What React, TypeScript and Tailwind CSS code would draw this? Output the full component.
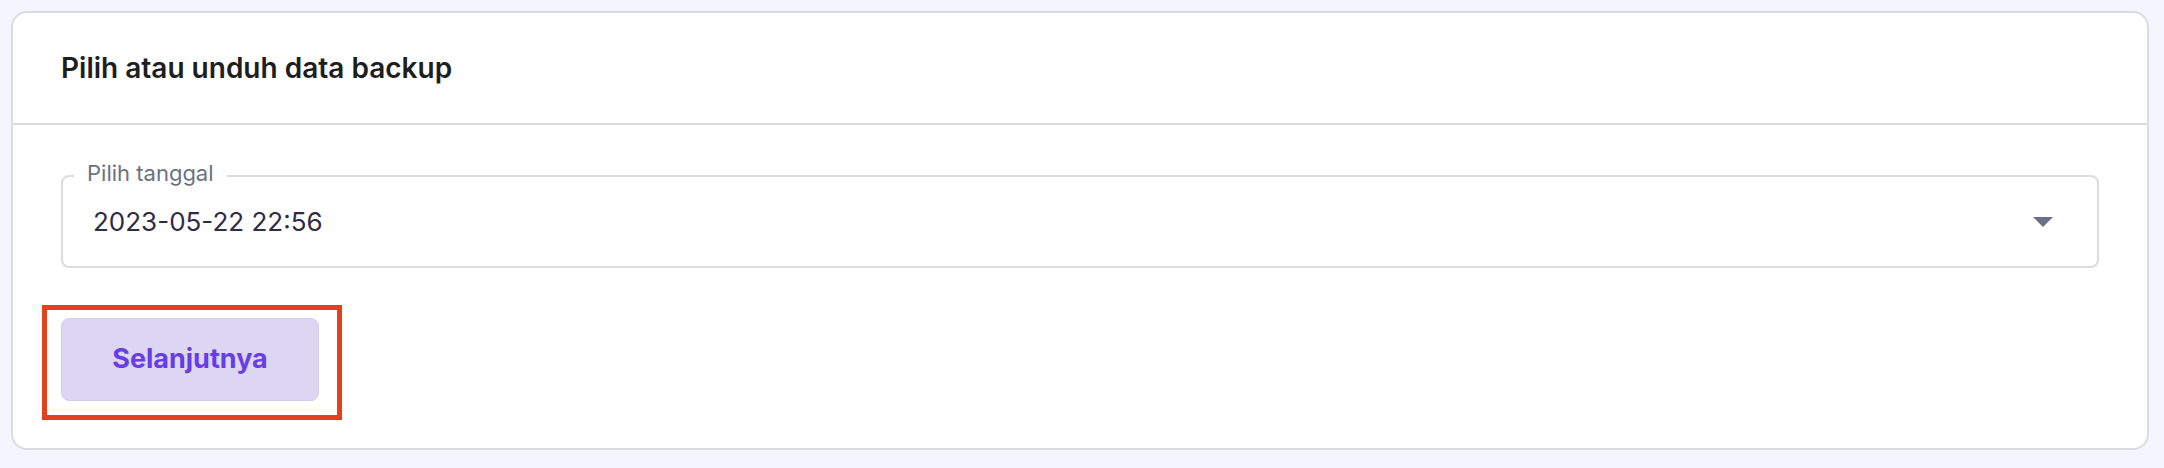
export default function App() {
  return (
    <div
      className="min-h-screen bg-[#f4f5ff] pt-[11px] pl-[11px] pr-[15px] pb-[18px]"
      style={{ fontFamily: 'Inter, "Noto Sans", sans-serif' }}
    >
      <div className="rounded-[16px] border-2 border-[#dadce0] bg-white">
        <div className="flex h-[112px] items-center border-b-2 border-[#d8dae0] pl-[48px]">
          <h2 className="text-[28px] font-semibold text-[#1d1e20]">Pilih atau unduh data backup</h2>
        </div>

        <div className="pl-[48px] pr-[48px] pt-[50px] pb-[47px]">
          <div className="relative flex h-[93px] items-center justify-between rounded-[8px] border-2 border-[#dadce0] pl-[30px] pr-[44px]">
            <span className="absolute left-[11px] top-[-18px] bg-white px-[13px] text-[22px] leading-[28px] text-[#6d7081]">
              Pilih tanggal
            </span>
            <span className="text-[26px] text-[#2f2c46]">2023-05-22 22:56</span>
            <svg width="20" height="10" viewBox="0 0 20 10">
              <path d="M0 0 H20 L10 10 Z" fill="#6d6e87" />
            </svg>
          </div>

          <div className="relative mt-[50px] w-[258px]">
            <button className="flex h-[83px] w-[258px] items-center justify-center rounded-[8px] border border-[#d3cdea] bg-[#ddd6f3] text-[27px] font-bold text-[#673de6]">
              Selanjutnya
            </button>
            <div className="pointer-events-none absolute -left-[19px] -right-[23px] -top-[13px] -bottom-[19px] border-[5px] border-[#e5401d]" />
          </div>
        </div>
      </div>
    </div>
  );
}
